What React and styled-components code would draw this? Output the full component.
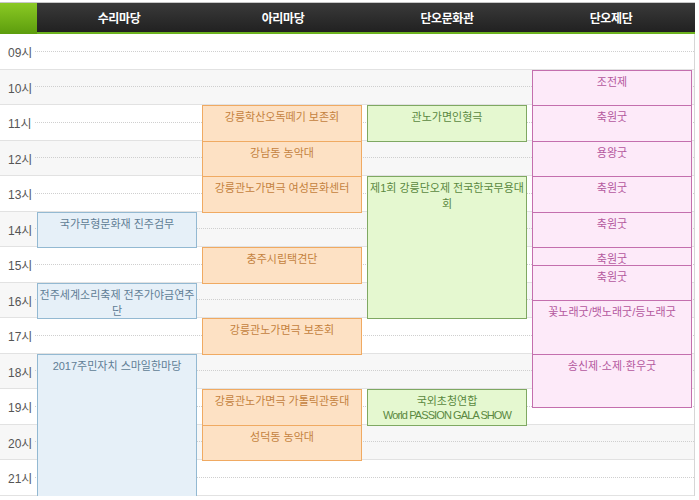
import React from 'react';
import styled, { createGlobalStyle } from 'styled-components';

const HOUR = 35.5;
const FIRST_HOUR = 9;
const LAST_HOUR = 21;

const VENUES = ['수리마당', '아리마당', '단오문화관', '단오제단'];

const PALETTE = [
  { bg: '#e6f0f8', border: '#93b9d2', text: '#5f7d95' },
  { bg: '#fde1c4', border: '#f0aa62', text: '#c4823e' },
  { bg: '#e5f8d0', border: '#7fa862', text: '#5a8840' },
  { bg: '#fdeaf9', border: '#c46fae', text: '#b4589e' },
];

const EVENTS = [
  { col: 0, from: 14, to: 15, title: '국가무형문화재 진주검무' },
  { col: 0, from: 16, to: 17, title: '전주세계소리축제 전주가야금연주단' },
  { col: 0, from: 18, to: 22, title: '2017주민자치 스마일한마당' },

  { col: 1, from: 11, to: 12, title: '강릉학산오독떼기 보존회' },
  { col: 1, from: 12, to: 13, title: '강남동 농악대' },
  { col: 1, from: 13, to: 14, title: '강릉관노가면극 여성문화센터' },
  { col: 1, from: 15, to: 16, title: '충주시립택견단' },
  { col: 1, from: 17, to: 18, title: '강릉관노가면극 보존회' },
  { col: 1, from: 19, to: 20, title: '강릉관노가면극 가톨릭관동대' },
  { col: 1, from: 20, to: 21, title: '성덕동 농악대' },

  { col: 2, from: 11, to: 12, title: '관노가면인형극' },
  { col: 2, from: 13, to: 17, title: '제1회 강릉단오제 전국한국무용대회' },
  { col: 2, from: 19, to: 20, title: '국외초청연합', sub: 'World PASSION GALA SHOW' },

  { col: 3, from: 10, to: 11, title: '조전제' },
  { col: 3, from: 11, to: 12, title: '축원굿' },
  { col: 3, from: 12, to: 13, title: '용왕굿' },
  { col: 3, from: 13, to: 14, title: '축원굿' },
  { col: 3, from: 14, to: 15, title: '축원굿' },
  { col: 3, from: 15, to: 15.5, title: '축원굿' },
  { col: 3, from: 15.5, to: 16.5, title: '축원굿' },
  { col: 3, from: 16.5, to: 18, title: '꽃노래굿/뱃노래굿/등노래굿' },
  { col: 3, from: 18, to: 19.5, title: '송신제·소제·환우굿' },
];

const hours = [];
for (let h = FIRST_HOUR; h <= LAST_HOUR; h += 1) hours.push(h);

// grid works in half hours
const slot = (h) => (h - FIRST_HOUR) * 2 + 1;

const App = () => (
  <>
    <GlobalStyle />
    <Page>
      <Header>
        <Corner />
        {VENUES.map((v) => (
          <HeadCell key={v}>{v}</HeadCell>
        ))}
      </Header>
      <Board>
        {hours.map((h, i) => (
          <HourRow key={h} $row={slot(h)} $alt={i % 2 === 1}>
            <TimeLabel>{String(h).padStart(2, '0')}시</TimeLabel>
            <Dots />
          </HourRow>
        ))}
        {EVENTS.map((e) => (
          <Event
            key={`${e.col}-${e.from}`}
            $col={e.col + 2}
            $start={slot(e.from)}
            $end={slot(e.to)}
            $tone={PALETTE[e.col]}
          >
            {e.title}
            {e.sub && <Sub>{e.sub}</Sub>}
          </Event>
        ))}
      </Board>
    </Page>
  </>
);

export default App;

const GlobalStyle = createGlobalStyle`
  html, body {
    margin: 0;
    padding: 0;
    background: #fff;
  }
  body {
    font-family: "Liberation Sans", "Noto Sans CJK KR", sans-serif;
  }
`;

const Page = styled.div`
  width: 695px;
  padding-top: 2px;
`;

const Header = styled.div`
  display: grid;
  grid-template-columns: 37px repeat(4, 164px);
  height: 31px;
  border-top: 1px solid #c8c8c8;
  background: linear-gradient(#3a3a3a, #1f1f1f);
  box-shadow: inset 0 -2px 0 #6cb21f;
`;

const Corner = styled.div`
  background: linear-gradient(#8bc924, #5c9d0d);
`;

const HeadCell = styled.div`
  display: flex;
  align-items: center;
  justify-content: center;
  padding-bottom: 2px;
  color: #fff;
  font-size: 12px;
  font-weight: bold;
  letter-spacing: -0.4px;
`;

const Board = styled.div`
  display: grid;
  grid-template-columns: 35px repeat(3, 165px) 164px;
  grid-template-rows: repeat(${(LAST_HOUR - FIRST_HOUR + 1) * 2}, ${HOUR / 2}px);
  border-right: 1px solid #d6d6d6;
`;

const HourRow = styled.div`
  grid-column: 1 / -1;
  grid-row: ${(p) => p.$row} / span 2;
  display: flex;
  align-items: center;
  box-sizing: border-box;
  border-bottom: 1px solid #e2e2e2;
  background: ${(p) => (p.$alt ? '#f7f7f7' : '#fff')};
`;

const TimeLabel = styled.span`
  width: 35px;
  box-sizing: border-box;
  padding-left: 8px;
  padding-top: 1px;
  font-size: 12px;
  color: #555;
`;

const Dots = styled.span`
  flex: 1;
  height: 0;
  border-top: 1px dotted #cfcfcf;
`;

const Event = styled.div`
  grid-column: ${(p) => p.$col};
  grid-row: ${(p) => p.$start} / ${(p) => p.$end};
  width: 160px;
  margin-left: 2px;
  margin-bottom: -1px;
  box-sizing: border-box;
  padding-top: 3px;
  border: 1px solid ${(p) => p.$tone.border};
  background: ${(p) => p.$tone.bg};
  color: ${(p) => p.$tone.text};
  font-size: 11px;
  line-height: 16px;
  text-align: center;
`;

const Sub = styled.div`
  line-height: 13px;
  letter-spacing: -0.9px;
`;
